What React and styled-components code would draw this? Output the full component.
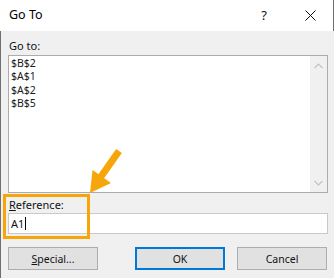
import React from 'react'
import styled, { createGlobalStyle } from 'styled-components'

const GlobalStyle = createGlobalStyle`
  html, body {
    margin: 0;
    padding: 0;
    background: #f0f0f0;
  }
  body {
    font-family: "Noto Sans", "Segoe UI", sans-serif;
  }
`

const Dialog = styled.div`
  position: relative;
  width: 334px;
  height: 278px;
  overflow: hidden;
  display: flex;
  flex-direction: column;
  background: #f0f0f0;
  color: #000;
`

const TitleBar = styled.div`
  height: 31px;
  flex: none;
  display: flex;
  align-items: center;
  background: #fff;
  border-right: 1px solid #6f6f6f;
  box-sizing: border-box;
  padding-left: 9px;
`

const Title = styled.span`
  flex: 1;
  font-size: 12.5px;
  line-height: 16px;
  margin-top: -1px;
`

const TitleButton = styled.span`
  width: 46px;
  display: flex;
  justify-content: center;
  align-items: center;
  font-size: 13px;
  color: #111;
  margin-top: -1px;
`

const Body = styled.div`
  flex: 1;
  display: flex;
  flex-direction: column;
  border-left: 1px solid #6f6f6f;
  padding: 7px 6px 0 7px;
`

const Label = styled.label`
  display: block;
  font-size: 11px;
  line-height: 16px;
  padding-left: 1px;
  color: #111;
  margin-bottom: ${p => p.$gap || 0}px;

  u {
    text-decoration: underline;
    text-underline-offset: 1px;
  }
`

const ListBox = styled.div`
  height: 138px;
  display: flex;
  border: 1px solid #acacac;
  box-sizing: border-box;
  background: #fff;
  margin-bottom: 4px;
`

const Items = styled.ul`
  flex: 1;
  list-style: none;
  margin: 0;
  padding: 1px 0 0 2px;
`

const Item = styled.li`
  font-size: 10.5px;
  line-height: 13.4px;
  color: #1a1a1a;
`

const ScrollBar = styled.div`
  width: 17px;
  display: flex;
  flex-direction: column;
  justify-content: space-between;
  align-items: center;
  background: #f0f0f0;
  padding: 7px 0 6px;
`

const Input = styled.div`
  height: 21px;
  display: flex;
  align-items: center;
  border: 1px solid #c9c9c9;
  box-sizing: border-box;
  background: #fff;
  padding-left: 2px;
  font-size: 11px;
  color: #111;
`

const Caret = styled.span`
  display: inline-block;
  width: 1px;
  height: 13px;
  background: #000;
  margin-left: 1px;
`

const Buttons = styled.div`
  display: flex;
  margin-top: 13px;
`

const Button = styled.button`
  width: 90px;
  height: 23px;
  padding: 0;
  font-family: inherit;
  font-size: 10.5px;
  color: #111;
  background: #e1e1e1;
  border: 1px solid ${p => (p.$primary ? '#0078d7' : '#adadad')};
  box-shadow: ${p => (p.$primary ? 'inset 0 0 0 1px #0078d7' : 'none')};
  margin-left: ${p => p.$offset || 0}px;

  u {
    text-underline-offset: 1px;
  }
`

const Highlight = styled.div`
  position: absolute;
  left: 3px;
  top: 194px;
  width: 87px;
  height: 45px;
  border: 3px solid #f6a50b;
  box-sizing: border-box;
  pointer-events: none;
`

const Arrow = styled.svg`
  position: absolute;
  left: 84px;
  top: 148px;
  pointer-events: none;
`

const Chevron = ({ up }) => (
  <svg width="9" height="6" viewBox="0 0 9 6">
    <path
      d={up ? 'M0.5 5 L4.5 1 L8.5 5' : 'M0.5 1 L4.5 5 L8.5 1'}
      fill="none"
      stroke="#c2c2c2"
      strokeWidth="1.2"
    />
  </svg>
)

const refs = ['$B$2', '$A$1', '$A$2', '$B$5']

const App = () => {
  return (
    <Dialog>
      <GlobalStyle />
      <TitleBar>
        <Title>Go To</Title>
        <TitleButton>?</TitleButton>
        <TitleButton>
          <svg width="11" height="11" viewBox="0 0 11 11">
            <path d="M0.5 0.5 L10.5 10.5 M10.5 0.5 L0.5 10.5" stroke="#111" strokeWidth="1" />
          </svg>
        </TitleButton>
      </TitleBar>
      <Body>
        <Label $gap={1}>Go to:</Label>
        <ListBox>
          <Items>
            {refs.map(r => (
              <Item key={r}>{r}</Item>
            ))}
          </Items>
          <ScrollBar>
            <Chevron up />
            <Chevron />
          </ScrollBar>
        </ListBox>
        <Label><u>R</u>eference:</Label>
        <Input>
          A1<Caret />
        </Input>
        <Buttons>
          <Button><u>S</u>pecial...</Button>
          <Button $primary $offset={37}>OK</Button>
          <Button $offset={12}>Cancel</Button>
        </Buttons>
      </Body>
      <Highlight />
      <Arrow width="40" height="48" viewBox="84 148 40 48">
        <line x1="119" y1="151" x2="100" y2="178" stroke="#f6a50b" strokeWidth="7" />
        <polygon points="90,193 92.5,170 111,183" fill="#f6a50b" />
      </Arrow>
    </Dialog>
  )
}

export default App
